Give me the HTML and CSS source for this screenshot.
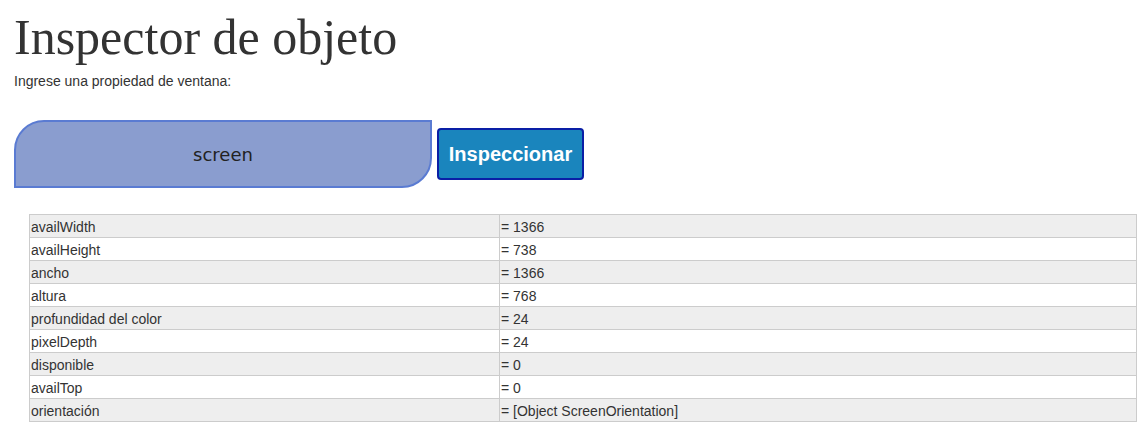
FILE: index.html
```html
<!DOCTYPE html>
<html lang="es">
<head>
<meta charset="utf-8">
<title>Inspector de objeto</title>
<link rel="stylesheet" href="styles.css">
</head>
<body>
<header class="header">
  <h1 class="title">Inspector de objeto</h1>
  <p class="subtitle">Ingrese una propiedad de ventana:</p>
</header>
<form class="search">
  <input class="search-input" type="text" value="screen">
  <button class="search-button" type="button">Inspeccionar</button>
</form>
<table class="props">
  <tbody>
    <tr><td class="key">availWidth</td><td class="val">= 1366</td></tr>
    <tr><td class="key">availHeight</td><td class="val">= 738</td></tr>
    <tr><td class="key">ancho</td><td class="val">= 1366</td></tr>
    <tr><td class="key">altura</td><td class="val">= 768</td></tr>
    <tr><td class="key">profundidad del color</td><td class="val">= 24</td></tr>
    <tr><td class="key">pixelDepth</td><td class="val">= 24</td></tr>
    <tr><td class="key">disponible</td><td class="val">= 0</td></tr>
    <tr><td class="key">availTop</td><td class="val">= 0</td></tr>
    <tr><td class="key">orientación</td><td class="val">= [Object ScreenOrientation]</td></tr>
  </tbody>
</table>
</body>
</html>
```

FILE: styles.css
```css
html, body {
  background: #ffffff;
}
body {
  margin: 8px;
  font-family: "Liberation Sans", Arial, sans-serif;
  color: #333333;
}
.header {
  padding-left: 6px;
}
.title {
  margin: 0;
  font-family: "Liberation Serif", "Times New Roman", serif;
  font-weight: normal;
  font-size: 50px;
  line-height: 58px;
  color: #333333;
}
.subtitle {
  margin: 7px 0 0;
  font-size: 14px;
  line-height: 16px;
  color: #333333;
}
.search {
  display: flex;
  align-items: center;
  gap: 5px;
  margin: 31px 0 0 6px;
}
.search-input {
  box-sizing: border-box;
  width: 418px;
  height: 68px;
  margin: 0;
  padding: 0;
  border: 2px solid #5a7bd2;
  border-radius: 30px 0 30px 0;
  background: #8a9dcf;
  font-family: "DejaVu Sans", sans-serif;
  font-size: 18px;
  color: #222222;
  text-align: center;
  outline: none;
}
.search-button {
  box-sizing: border-box;
  width: 147px;
  height: 52px;
  margin: 0;
  padding: 0;
  border: 2px solid #0a1fa6;
  border-radius: 4px;
  background: #1a85bd;
  color: #ffffff;
  font-family: "Liberation Sans", Arial, sans-serif;
  font-weight: bold;
  font-size: 20px;
}
.props {
  box-sizing: border-box;
  width: calc(100% - 21px);
  margin: 26px 0 0 21px;
  border-collapse: collapse;
  border: 1px solid #cccccc;
  font-size: 14px;
  color: #333333;
}
.props td {
  height: 21px;
  padding: 1px 1px 0;
  border: 1px solid #cccccc;
  line-height: 16px;
  vertical-align: middle;
}
.props .key {
  width: 467px;
}
.props tr:nth-child(odd) td {
  background: #eeeeee;
}
.props tr:nth-child(even) td {
  background: #ffffff;
}
```
